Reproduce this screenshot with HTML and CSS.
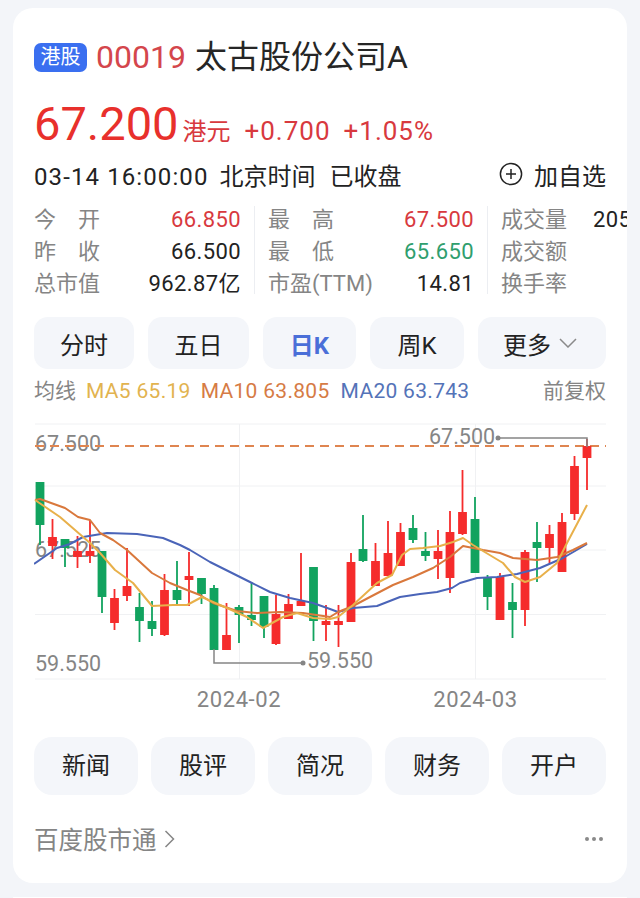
FILE: index.html
```html
<!DOCTYPE html>
<html lang="zh-CN">
<head>
    <meta charset="UTF-8">
    <title>太古股份公司A</title>
    <link rel="stylesheet" href="styles.css">
</head>
<body>
    <div class="card">
        <!-- 标题 -->
        <div class="head">
            <span class="tag">港股</span>
            <span class="code">00019</span>
            <span class="name">太古股份公司A</span>
        </div>

        <!-- 价格 -->
        <div class="price">
            <span class="now">67.200</span>
            <span class="unit">港元</span>
            <span class="diff">+0.700</span>
            <span class="diff">+1.05%</span>
        </div>

        <!-- 时间 -->
        <div class="time">
            <span class="stamp">
                <span class="clock">03-14 16:00:00</span>
                <span class="zone">北京时间</span>
                <span class="state">已收盘</span>
            </span>
            <span class="add">
                <svg class="add-icon" viewBox="0 0 24 24" width="24" height="24">
                    <circle cx="12" cy="12" r="10.6"/>
                    <path d="M12 7v10M7 12h10"/>
                </svg>
                <span>加自选</span>
            </span>
        </div>

        <!-- 行情数据 -->
        <div class="stats">
            <div class="col c1">
                <div class="row"><span class="lb just">今开</span><span class="red">66.850</span></div>
                <div class="row"><span class="lb just">昨收</span><span>66.500</span></div>
                <div class="row"><span class="lb">总市值</span><span>962.87亿</span></div>
            </div>
            <div class="col c2">
                <div class="row"><span class="lb just">最高</span><span class="red">67.500</span></div>
                <div class="row"><span class="lb just">最低</span><span class="green">65.650</span></div>
                <div class="row"><span class="lb">市盈(TTM)</span><span>14.81</span></div>
            </div>
            <div class="col c3">
                <div class="row"><span class="lb">成交量</span><span class="vol">205万</span></div>
                <div class="row"><span class="lb">成交额</span></div>
                <div class="row"><span class="lb">换手率</span></div>
            </div>
        </div>

        <!-- K线 탭 -->
        <div class="tabs">
            <div class="tab t1">分时</div>
            <div class="tab t2">五日</div>
            <div class="tab t3 on">日K</div>
            <div class="tab t4">周K</div>
            <div class="tab t5">更多
                <svg class="more" viewBox="0 0 18 10" width="18" height="10"><path d="M1 1l8 8 8-8"/></svg>
            </div>
        </div>

        <!-- 均线 -->
        <div class="ma">
            <span class="ma-lb">均线</span>
            <span class="m5">MA5 65.19</span>
            <span class="m10">MA10 63.805</span>
            <span class="m20">MA20 63.743</span>
            <span class="fq">前复权</span>
        </div>

        <!-- 차트 -->
        <svg class="chart" viewBox="34 420 572 296" width="572" height="296">
            <g class="grid">
                <path d="M35 424H606M35 486H606M35 550H606M35 614.500H606M35 679H606M239.500 424V679M475.500 424V679"/>
            </g>
            <text class="axis" x="35" y="451">67.500</text>
            <text class="axis" x="35" y="557">67.525</text>
            <text class="axis" x="35" y="671">59.550</text>
            <path class="dash" d="M35 446H606"/>

            <g class="dn">
                <path d="M40 483V545M36.500 483h7V524h-7z"/>
                <path d="M65 543V567M61.500 540h7V547h-7z"/>
                <path d="M102 552V613M98.500 552h7V596h-7z"/>
                <path d="M139.500 593V642M136 608h7V620h-7z"/>
                <path d="M152 601V636M148.500 622h7V628h-7z"/>
                <path d="M177 561V605M173.500 591h7V599h-7z"/>
                <path d="M201.500 579V604M198 579h7V593h-7z"/>
                <path d="M214 585V649M210.500 589h7V649h-7z"/>
                <path d="M239 605V643M235.500 608h7V614h-7z"/>
                <path d="M251.500 582V626M248 616h7V619h-7z"/>
                <path d="M264 597V638M260.500 597h7V626h-7z"/>
                <path d="M313.500 568V641M310 568h7V620h-7z"/>
                <path d="M363 515V562M359.500 550h7V560h-7z"/>
                <path d="M413 515V543M409.500 529h7V539h-7z"/>
                <path d="M425.500 532V561M422 552h7V555h-7z"/>
                <path d="M475 497V572M471.500 520h7V572h-7z"/>
                <path d="M487.500 575V610M484 579h7V596h-7z"/>
                <path d="M512.500 583V638M509 603h7V609h-7z"/>
                <path d="M537 522V582M533.500 543h7V547h-7z"/>
            </g>
            <g class="up">
                <path d="M52.500 519V559M49 538h7V545h-7z"/>
                <path d="M77.500 536V568M74 552h7V556h-7z"/>
                <path d="M90 520V563M86.500 552h7V555h-7z"/>
                <path d="M114.500 589V630M111 599h7V622h-7z"/>
                <path d="M127 548V601M123.500 587h7V595h-7z"/>
                <path d="M164.500 574V636M161 591h7V634h-7z"/>
                <path d="M189 552V606M185.500 577h7V579h-7z"/>
                <path d="M226.500 603V649M223 636h7V649h-7z"/>
                <path d="M276 595V645M272.500 615h7V643h-7z"/>
                <path d="M288.500 594V619M285 605h7V618h-7z"/>
                <path d="M301 553V606M297.500 602h7V605h-7z"/>
                <path d="M326 605V641M322.500 622h7V624h-7z"/>
                <path d="M338.500 605V647M335 622h7V624h-7z"/>
                <path d="M351 553V621M347.500 563h7V621h-7z"/>
                <path d="M375.500 543V585M372 562h7V585h-7z"/>
                <path d="M388 521V575M384.500 554h7V575h-7z"/>
                <path d="M400.500 523V565M397 533h7V565h-7z"/>
                <path d="M438 530V579M434.500 552h7V558h-7z"/>
                <path d="M450 511V593M446.500 533h7V577h-7z"/>
                <path d="M462.500 470V535M459 513h7V533h-7z"/>
                <path d="M500 573V619M496.500 578h7V619h-7z"/>
                <path d="M525 550V626M521.500 553h7V609h-7z"/>
                <path d="M549.500 525V563M546 535h7V547h-7z"/>
                <path d="M562 513V571M558.500 523h7V571h-7z"/>
                <path d="M574.500 456V520M571 467h7V513h-7z"/>
                <path d="M587 439V490M583.500 447h7V457h-7z"/>
            </g>

            <!-- 균선 -->
            <polyline class="l20" points="34,564 57,548 70,544 83,537 107,533 137,534 163,538 180,545 190,550 210,562 230,572 250,582 270,592 290,598 313,603 330,609 338,612 353,608 377,606 400,597 420,594 437,592 452,588 460,583 477,578 497,577 517,574 540,568 563,558 587,544"/>
            <polyline class="l10" points="35,500 40,499 65,508 78,517 90,520 100,533 113,540 127,550 152,573 170,583 187,590 200,595 213,603 237,611 257,613 280,612 303,613 330,617 338,612 353,606 370,597 393,585 413,577 433,568 450,557 463,546 483,550 500,553 513,558 537,560 557,557 573,550 587,543"/>
            <polyline class="l5" points="35,500 60,517 90,543 100,553 115,570 133,583 152,606 173,605 187,605 202,597 213,602 227,608 247,617 263,628 283,617 297,613 313,618 330,619 338,617 353,605 377,583 392,575 402,555 410,549 423,548 440,546 453,542 463,538 473,545 493,557 503,563 515,577 525,582 540,577 557,563 567,543 587,505"/>

            <!-- 최고 최저 -->
            <path class="mark" d="M587 447V438H498"/>
            <circle class="dot" cx="498" cy="438" r="2.500"/>
            <text class="axis" x="429" y="444">67.500</text>
            <path class="mark" d="M214 649V663H303"/>
            <circle class="dot" cx="303" cy="663" r="2.500"/>
            <text class="axis" x="307" y="668">59.550</text>

            <text class="date" x="239" y="707">2024-02</text>
            <text class="date" x="475.500" y="707">2024-03</text>
        </svg>

        <!-- 하단 버튼 -->
        <div class="links">
            <div class="link">新闻</div>
            <div class="link">股评</div>
            <div class="link">简况</div>
            <div class="link">财务</div>
            <div class="link">开户</div>
        </div>

        <div class="foot">
            <span class="src">百度股市通
                <svg class="arrow" viewBox="0 0 11 18" width="11" height="18"><path d="M1.500 1l8 8-8 8"/></svg>
            </span>
            <span class="dots"><i></i><i></i><i></i></span>
        </div>
    </div>
    <div class="card next"></div>
</body>
</html>
```

FILE: styles.css
```css
html, body {
    margin: 0;
    height: 898px;
    overflow: hidden;
}
body {
    background-color: #f3f5f9;
    font-family: Roboto, "Noto Sans CJK SC", sans-serif;
    color: #222;
}

/* 카드 */
.card {
    width: 614px;
    height: 875px;
    box-sizing: border-box;
    margin: 8px 13px 14px;
    padding: 29px 21px 0;
    background-color: #fff;
    border-radius: 20px;
    overflow: hidden;
}
.next {
    height: 1px;
    margin-bottom: 0;
    padding: 0;
}

/* 标题 */
.head {
    display: flex;
    align-items: baseline;
    height: 40px;
    line-height: 40px;
}
.tag {
    align-self: center;
    width: 53px;
    height: 29px;
    margin: 0 9px 0 0;
    background-color: #3a6ff0;
    border-radius: 7px;
    color: #fff;
    font-size: 20px;
    line-height: 28px;
    text-align: center;
}
.code {
    margin-right: 9px;
    color: #d4464c;
    font-size: 32px;
}
.name {
    font-size: 32px;
    color: #262626;
}

/* 价格 */
.price {
    display: flex;
    align-items: baseline;
    height: 56px;
    margin-top: 19px;
    line-height: 56px;
    color: #d8393e;
    font-size: 26px;
}
.now {
    color: #e8302c;
    font-size: 47px;
}
.unit {
    margin: 0 14px 0 4px;
    font-size: 24px;
}
.diff {
    margin-right: 13px;
    letter-spacing: 1px;
}

/* 时间 */
.time {
    display: flex;
    justify-content: space-between;
    align-items: center;
    height: 36px;
    margin-top: 4px;
    font-size: 24px;
}
.stamp {
    display: flex;
    align-items: baseline;
    gap: 11px;
}
.clock {
    letter-spacing: 1.100px;
}
.state {
    margin-left: 3px;
}
.add {
    display: flex;
    align-items: center;
    gap: 11px;
}
.add-icon {
    fill: none;
    stroke: #222;
    stroke-width: 1.500;
}

/* 行情数据 */
.stats {
    display: flex;
    height: 88px;
    margin-top: 14px;
    font-size: 22px;
    white-space: nowrap;
}
.col {
    flex: none;
    display: flex;
    flex-direction: column;
    box-sizing: border-box;
    height: 88px;
}
.c1 {
    width: 220px;
    padding-right: 13px;
}
.c2 {
    width: 233px;
    padding: 0 13px 0 13px;
    border-left: 1px solid #eceef2;
}
.c3 {
    padding-left: 13px;
    border-left: 1px solid #eceef2;
}
.row {
    display: flex;
    justify-content: space-between;
    align-items: baseline;
    height: 32px;
    line-height: 32px;
    margin-top: -2px;
    letter-spacing: .4px;
}
.row + .row {
    margin-top: 0;
}
.lb {
    color: #858585;
    letter-spacing: 0;
}
.just {
    width: 66px;
    text-align-last: justify;
}
.vol {
    margin-left: 26px;
}
.red {
    color: #d8393e;
}
.green {
    color: #2f9e6e;
}

/* 탭 */
.tabs {
    display: flex;
    gap: 14px;
    margin-top: 23px;
}
.tab {
    display: flex;
    justify-content: center;
    align-items: center;
    gap: 8px;
    height: 52px;
    background-color: #f4f6fa;
    border-radius: 14px;
    font-size: 24px;
}
.t1 { width: 100px; }
.t2 { width: 101px; }
.t3 { width: 93px; }
.t4 { width: 94px; }
.t5 {
    box-sizing: border-box;
    width: 128px;
    padding-right: 4px;
}
.on {
    color: #4a6fd8;
    font-weight: bold;
}
.more {
    fill: none;
    stroke: #8a8a8a;
    stroke-width: 1.500;
}

/* 均线 */
.ma {
    display: flex;
    align-items: baseline;
    height: 30px;
    line-height: 30px;
    margin-top: 7px;
    font-size: 21px;
}
.ma-lb {
    margin-right: 10px;
    color: #858585;
}
.m5 {
    margin-right: 10px;
    color: #e2b34f;
    letter-spacing: .3px;
}
.m10 {
    margin-right: 11px;
    color: #d67b45;
    letter-spacing: .3px;
}
.m20 {
    color: #5473b8;
    letter-spacing: .3px;
}
.fq {
    margin-left: auto;
    color: #858585;
}

/* 차트 */
.chart {
    display: block;
    margin-top: 14px;
}
.grid path {
    fill: none;
    stroke: #f0f1f3;
    stroke-width: 1;
}
.axis {
    fill: #858585;
    font-size: 21.500px;
}
.date {
    fill: #858585;
    font-size: 22px;
    letter-spacing: .6px;
    text-anchor: middle;
}
.dash {
    fill: none;
    stroke: #df8550;
    stroke-width: 1.800;
    stroke-dasharray: 9 6;
}
.dn path {
    fill: #12a35f;
    stroke: #12a35f;
    stroke-width: 1.800;
}
.up path {
    fill: #f52c2c;
    stroke: #f52c2c;
    stroke-width: 1.800;
}
.l5, .l10, .l20 {
    fill: none;
    stroke-width: 2;
    stroke-linejoin: round;
}
.l5 { stroke: #e8b04a; }
.l10 { stroke: #d9783c; }
.l20 { stroke: #4a64b8; }
.mark {
    fill: none;
    stroke: #858585;
    stroke-width: 1.500;
}
.dot {
    fill: #858585;
}

/* 하단 버튼 */
.links {
    display: grid;
    grid-template-columns: repeat(5, 104px);
    gap: 13px;
    margin-top: 21px;
}
.link {
    height: 58px;
    background-color: #f4f6fa;
    border-radius: 18px;
    font-size: 24px;
    line-height: 58px;
    text-align: center;
}
.foot {
    display: flex;
    justify-content: space-between;
    align-items: center;
    width: 572px;
    margin-top: 26px;
    color: #858585;
    font-size: 24.500px;
}
.src {
    display: flex;
    align-items: center;
    gap: 7px;
}
.arrow {
    fill: none;
    stroke: #858585;
    stroke-width: 1.500;
}
.dots {
    display: flex;
    gap: 3px;
    margin-right: 3px;
}
.dots i {
    width: 4px;
    height: 4px;
    background-color: #8a8a8a;
    border-radius: 50%;
}
```
